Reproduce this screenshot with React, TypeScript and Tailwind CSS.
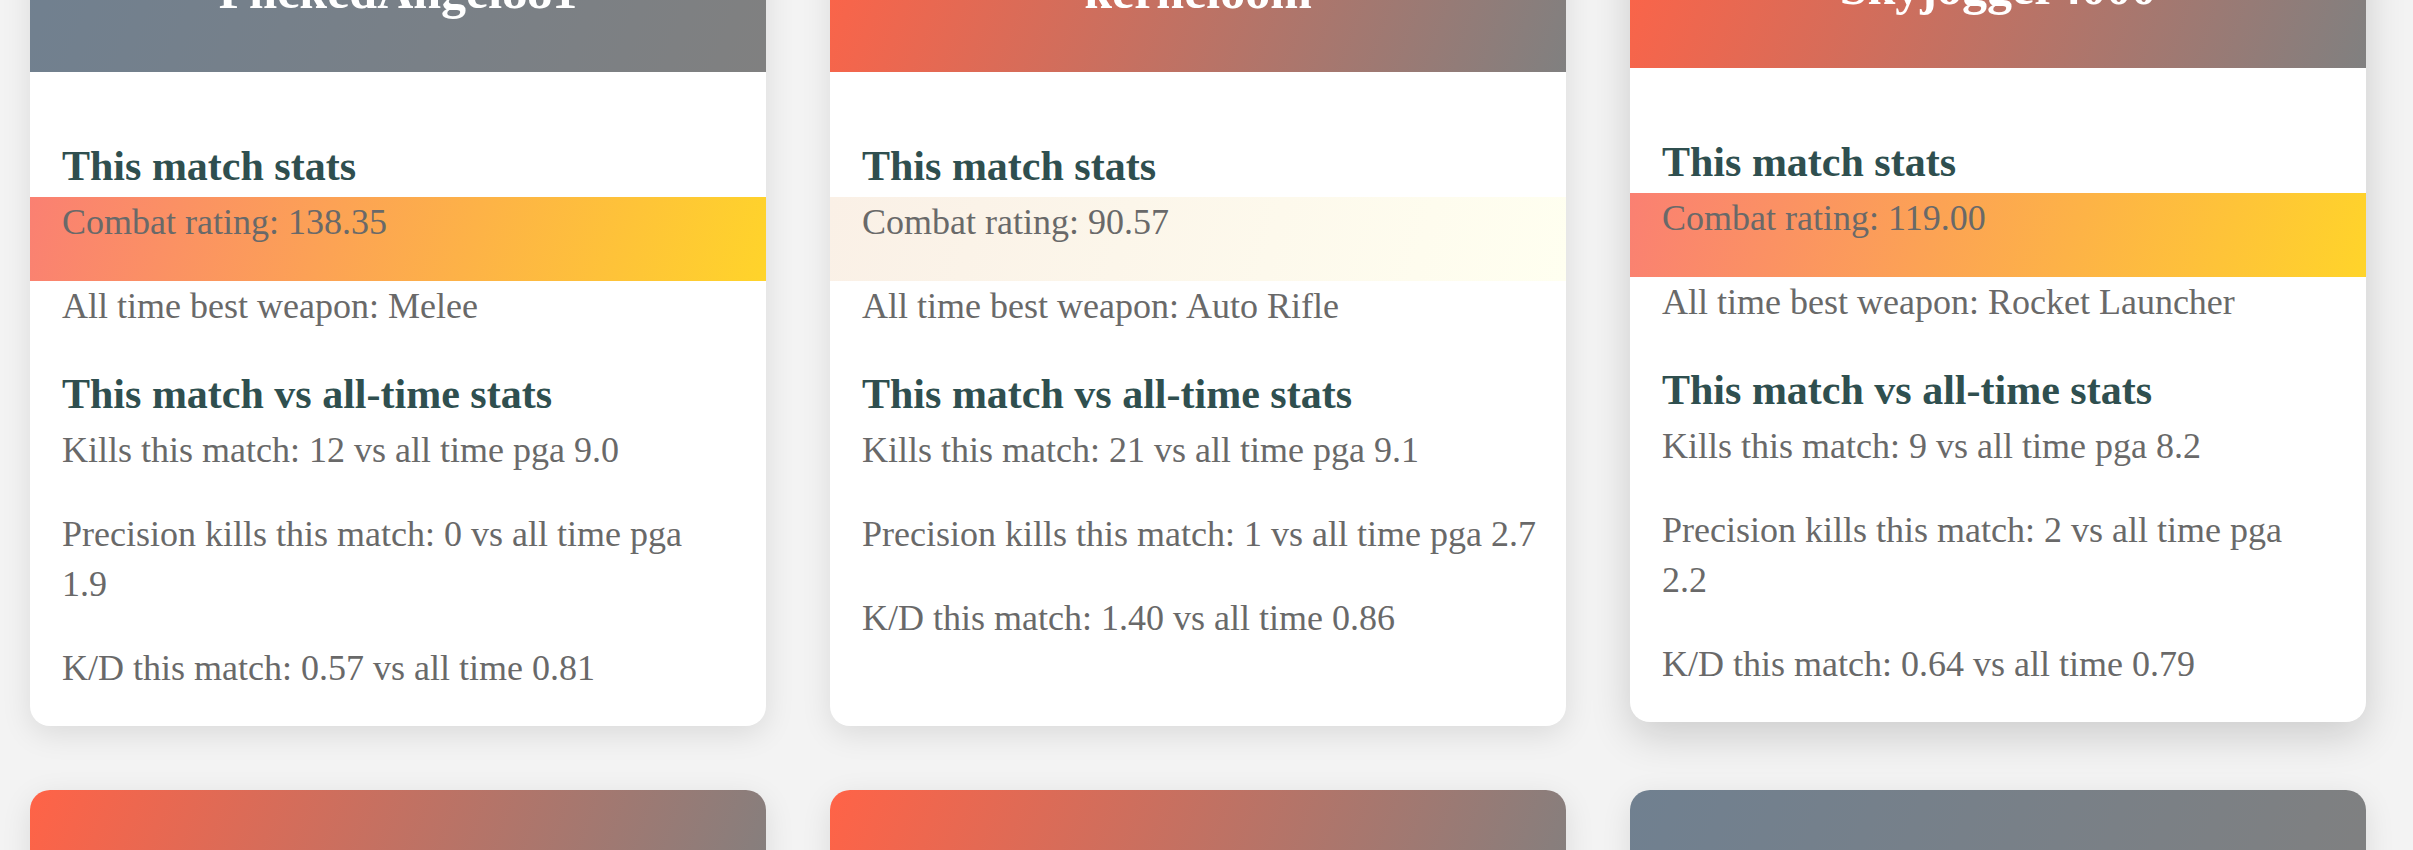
import React from "react";

type Card = {
  name: string;
  header: string;
  band: string;
  rating: string;
  weapon: string;
  kills: string;
  killsAvg: string;
  prec: string;
  precAvg: string;
  precBreak: boolean;
  kd: string;
  kdAll: string;
  hover?: boolean;
};

const HOT = "bg-[linear-gradient(105deg,#fa8072,#ffd42a)]";
const MILD = "bg-[linear-gradient(105deg,#faf0e6,#fffff0)]";
const GRAY_HEAD = "bg-[linear-gradient(110deg,#708090,#808080)]";
const RED_HEAD = "bg-[linear-gradient(110deg,#ff6347,#808080)]";

const cards: Card[] = [
  { name: "FlickedAngel881", header: GRAY_HEAD, band: HOT, rating: "138.35", weapon: "Melee", kills: "12", killsAvg: "9.0", prec: "0", precAvg: "1.9", precBreak: true, kd: "0.57", kdAll: "0.81" },
  { name: "kerneloom", header: RED_HEAD, band: MILD, rating: "90.57", weapon: "Auto Rifle", kills: "21", killsAvg: "9.1", prec: "1", precAvg: "2.7", precBreak: false, kd: "1.40", kdAll: "0.86" },
  { name: "Skyjogger4000", header: RED_HEAD, band: HOT, rating: "119.00", weapon: "Rocket Launcher", kills: "9", killsAvg: "8.2", prec: "2", precAvg: "2.2", precBreak: true, kd: "0.64", kdAll: "0.79", hover: true },
  { name: "Vexcalibur", header: RED_HEAD, band: MILD, rating: "95.12", weapon: "Hand Cannon", kills: "10", killsAvg: "8.7", prec: "3", precAvg: "2.1", precBreak: true, kd: "0.91", kdAll: "0.88" },
  { name: "Nightstalker", header: RED_HEAD, band: MILD, rating: "88.40", weapon: "Pulse Rifle", kills: "8", killsAvg: "7.9", prec: "2", precAvg: "2.4", precBreak: true, kd: "0.73", kdAll: "0.80" },
  { name: "GhostShell", header: GRAY_HEAD, band: HOT, rating: "124.18", weapon: "Sniper Rifle", kills: "14", killsAvg: "9.4", prec: "6", precAvg: "3.1", precBreak: true, kd: "1.12", kdAll: "0.95" },
];

function StatCard({ c }: { c: Card }) {
  return (
    <div
      className={
        "flex flex-col overflow-hidden rounded-[20px] bg-white " +
        (c.hover
          ? "-translate-y-[4px] shadow-[0_14px_40px_rgba(0,0,0,0.16)]"
          : "shadow-[0_8px_30px_rgba(0,0,0,0.1)]")
      }
    >
      <div className={"pt-[57px] pb-[51px] text-center " + c.header}>
        <h2 className="text-[50px] font-bold leading-[60px] text-white">{c.name}</h2>
      </div>
      <div className="pt-[65px] text-[36px] leading-[50px] text-[#696969]">
        <h3 className="mt-[4px] mb-[6px] px-[32px] text-[42px] font-bold leading-[50px] text-[#2f4f4f]">
          This match stats
        </h3>
        <div className={"pb-[34px] " + c.band}>
          <p className="px-[32px]">Combat rating: {c.rating}</p>
        </div>
        <p className="mb-[38px] px-[32px]">All time best weapon: {c.weapon}</p>
        <h3 className="mt-[4px] mb-[6px] px-[32px] text-[42px] font-bold leading-[50px] text-[#2f4f4f]">
          This match vs all-time stats
        </h3>
        <p className="mb-[34px] px-[32px]">
          Kills this match: {c.kills} vs all time pga {c.killsAvg}
        </p>
        {c.precBreak ? (
          <p className="mb-[34px] px-[32px]">
            Precision kills this match: {c.prec} vs all time pga
            <br />
            {c.precAvg}
          </p>
        ) : (
          <p className="mb-[34px] whitespace-nowrap px-[32px]">
            Precision kills this match: {c.prec} vs all time pga {c.precAvg}
          </p>
        )}
        <p className="mb-[33px] px-[32px]">
          K/D this match: {c.kd} vs all time {c.kdAll}
        </p>
      </div>
    </div>
  );
}

export default function App() {
  return (
    <div
      className="h-screen overflow-hidden bg-[#f3f3f3]"
      style={{ fontFamily: '"Liberation Serif", "Times New Roman", serif' }}
    >
      <div className="-mt-[96px] grid grid-cols-[repeat(3,736px)] gap-x-[64px] gap-y-[64px] pl-[30px]">
        {cards.map((c, i) => (
          <StatCard key={i} c={c} />
        ))}
      </div>
    </div>
  );
}
